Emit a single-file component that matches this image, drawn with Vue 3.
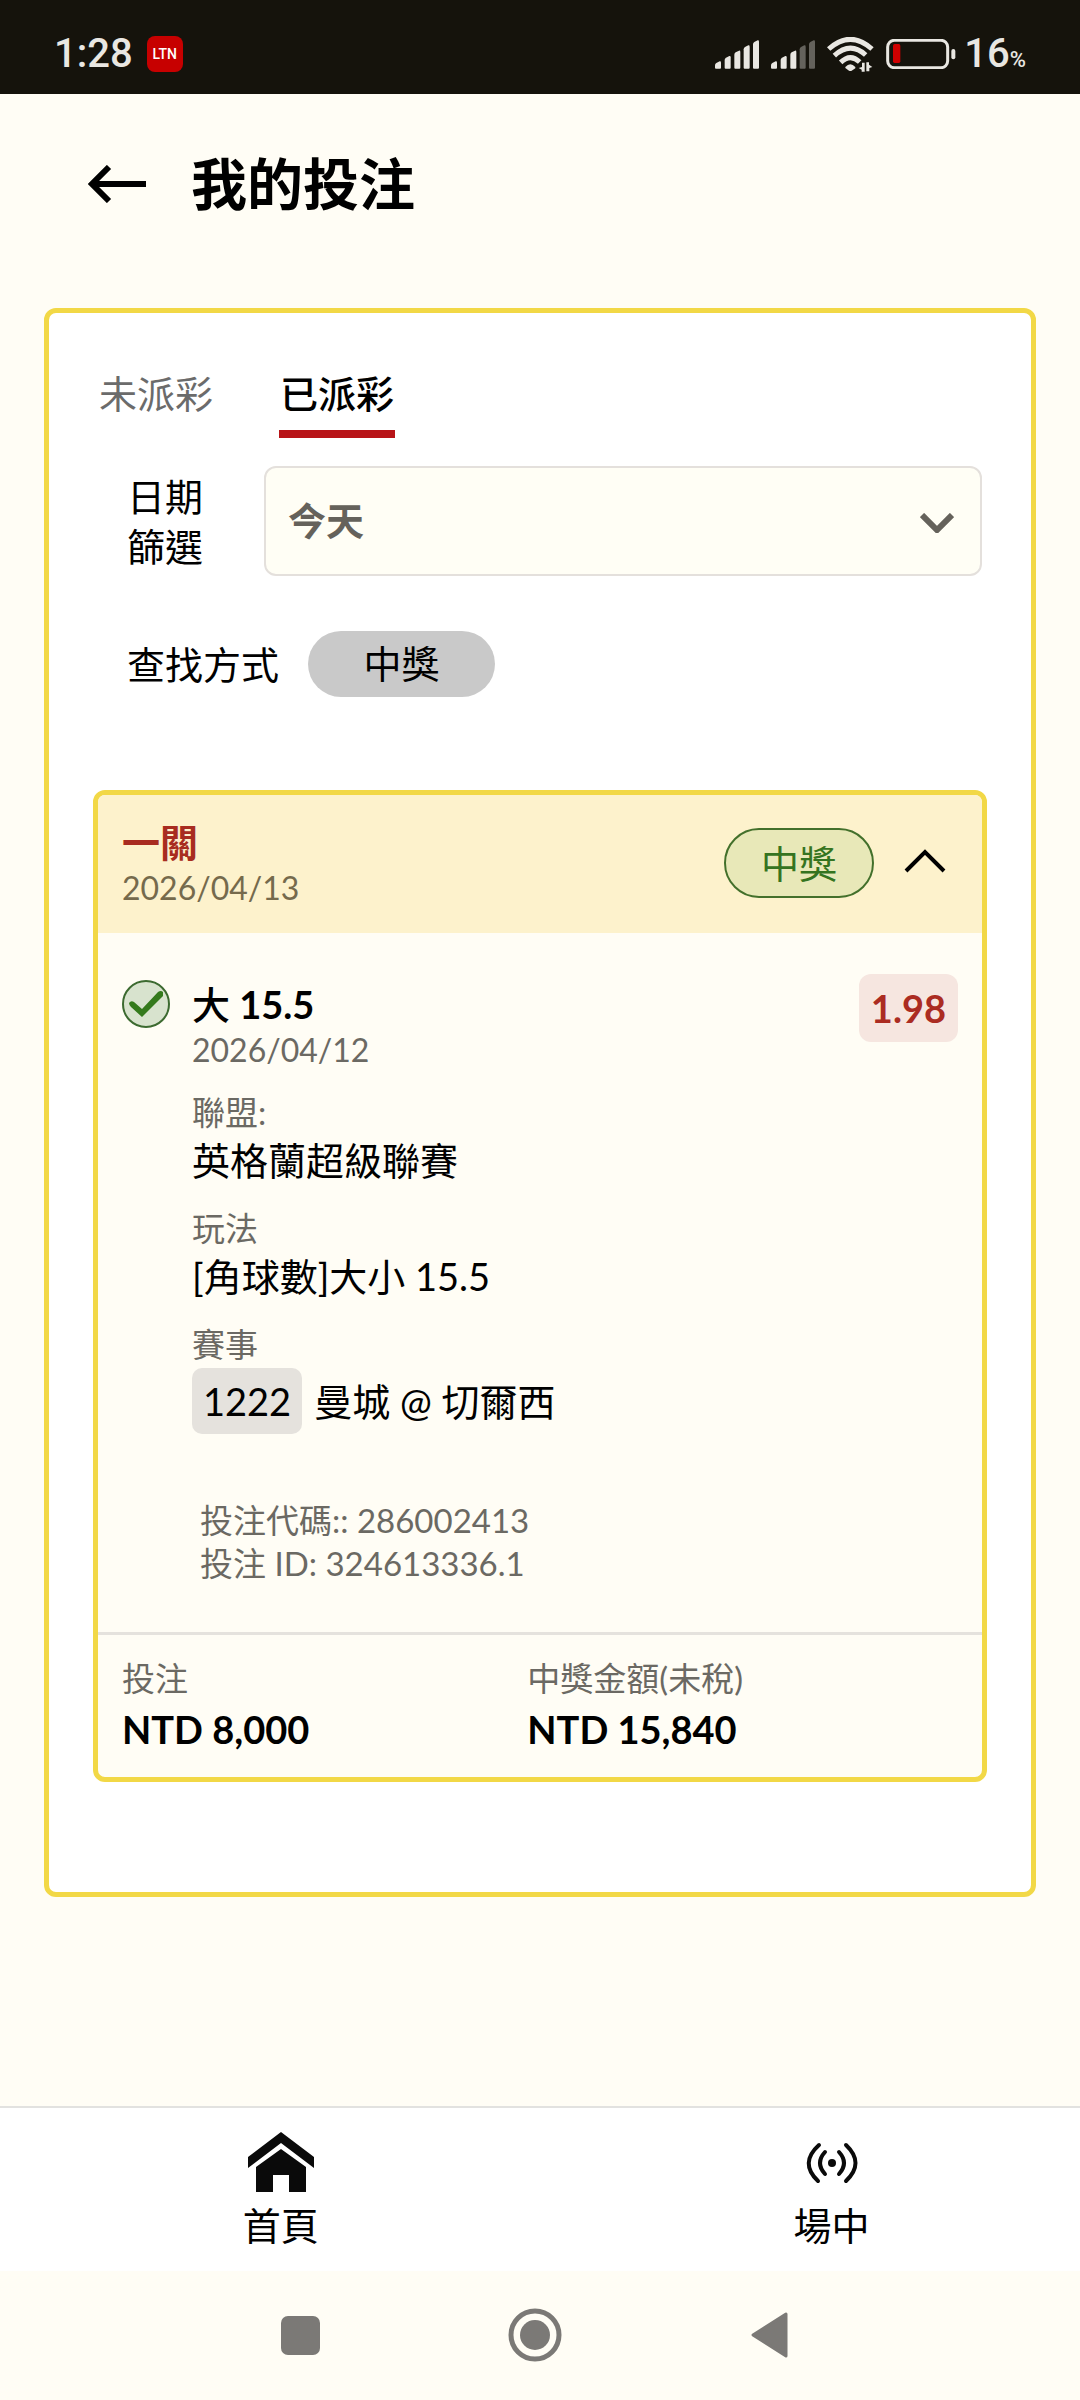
<script setup>
import { ref } from 'vue'

const tab = ref('settled')
const day = ref('today')
const open = ref(true)

const tabs = [
  { id: 'open', label: '未派彩' },
  { id: 'settled', label: '已派彩' }
]
const signals = [5, 3]
const bars = [
  { x: 0, top: 64 },
  { x: 29, top: 48 },
  { x: 58, top: 32 },
  { x: 86, top: 16 },
  { x: 114, top: 1 }
]
const barPath = (b) =>
  `M${b.x} ${b.top + 12}Q${b.x} ${b.top + 7} ${b.x + 4} ${b.top + 5}L${b.x + 14} ${b.top}Q${b.x + 18} ${b.top - 1} ${b.x + 18} ${b.top + 4}V83Q${b.x + 18} 86 ${b.x + 15} 86H${b.x + 3}Q${b.x} 86 ${b.x} 83Z`
</script>

<template>
  <div class="page">
    <div class="status">
      <span class="clock">1:28</span>
      <span class="app-badge">LTN</span>
      <div class="status-icons">
        <svg v-for="(level, i) in signals" :key="i" class="signal" viewBox="0 0 132 87" aria-hidden="true">
          <path v-for="(b, n) in bars" :key="n" :d="barPath(b)" :fill="n < level ? '#e9e7e2' : '#64625c'" />
        </svg>
        <svg class="wifi" viewBox="0 0 141 105" aria-hidden="true">
          <g fill="none" stroke="#e9e7e2" stroke-width="15">
            <path d="M5 36Q70-22 135 36" />
            <path d="M22 56Q70 12 116 54" />
            <path d="M41 76Q70 48 98 75" />
          </g>
          <path d="M55 90Q70 73 85 90V94L74 101Q70 103 66 101L55 93Z" fill="#e9e7e2" />
          <path d="M105 77H113V104H104V98L95 93L105 90ZM118 76H126V83L136 90L127 93V103H118Z" fill="#e9e7e2" />
        </svg>
        <svg class="battery" viewBox="0 0 208 90" aria-hidden="true">
          <rect x="4" y="4" width="180" height="82" rx="20" fill="none" stroke="#e9e7e2" stroke-width="9" />
          <rect x="20" y="15" width="22" height="57" rx="5" fill="#d00000" />
          <rect x="195" y="30" width="12" height="31" rx="6" fill="#e9e7e2" />
        </svg>
        <span class="charge">16<small>%</small></span>
      </div>
    </div>

    <header class="header">
      <button class="back" type="button" aria-label="返回">
        <svg viewBox="0 0 58 38"><path d="M58 19H5M21 2L4 19L21 36" fill="none" stroke="#000" stroke-width="6" /></svg>
      </button>
      <h1>我的投注</h1>
    </header>

    <main class="main">
      <section class="panel">
        <div class="tabs" role="tablist">
          <button
            v-for="t in tabs"
            :key="t.id"
            type="button"
            role="tab"
            class="tab"
            :class="{ active: tab === t.id }"
            :aria-selected="tab === t.id"
            @click="tab = t.id"
          >{{ t.label }}</button>
        </div>

        <div class="filter">
          <label for="day">日期篩選</label>
          <div class="select-wrap">
            <select id="day" v-model="day">
              <option value="today">今天</option>
            </select>
            <svg viewBox="0 0 34 20" aria-hidden="true"><path d="M2 2L17 17L32 2" fill="none" stroke="#65625b" stroke-width="6" /></svg>
          </div>
        </div>

        <div class="search">
          <span>查找方式</span>
          <button type="button" class="chip">中獎</button>
        </div>

        <article class="card">
          <div class="card-head">
            <div>
              <h2>一關</h2>
              <time class="muted-gold">2026/04/13</time>
            </div>
            <span class="won">中獎</span>
            <button class="toggle" type="button" aria-label="收合" @click="open = !open">
              <svg viewBox="0 0 42 24"><path d="M2 22L21 3L40 22" fill="none" stroke="#000" stroke-width="4" /></svg>
            </button>
          </div>

          <div v-show="open" class="card-body">
            <svg class="check" viewBox="0 0 48 48" aria-hidden="true">
              <circle cx="24" cy="24" r="23" fill="#d8e3ce" stroke="#3c6a30" stroke-width="2" />
              <path d="M7 23Q9 20 12 22L20 29L36 12Q39 10 41 12V16L20 37L9 27Q7 25 7 23Z" fill="#347a1c" />
            </svg>
            <div class="details">
              <h3><span class="pick">大</span> 15.5</h3>
              <time class="sub">2026/04/12</time>
              <dl>
                <dt>聯盟:</dt>
                <dd>英格蘭超級聯賽</dd>
                <dt>玩法</dt>
                <dd>[角球數]大小 15.5</dd>
                <dt>賽事</dt>
                <dd class="match"><span class="code">1222</span>曼城 @ 切爾西</dd>
              </dl>
              <div class="ids">
                <p>投注代碼:: 286002413</p>
                <p>投注 ID: 324613336.1</p>
              </div>
            </div>
            <span class="odds">1.98</span>
          </div>

          <dl class="totals">
            <div>
              <dt>投注</dt>
              <dd>NTD 8,000</dd>
            </div>
            <div>
              <dt>中獎金額(未稅)</dt>
              <dd>NTD 15,840</dd>
            </div>
          </dl>
        </article>
      </section>
    </main>

    <nav class="nav">
      <a href="#home">
        <svg class="nav-icon" viewBox="0 0 66 60" aria-hidden="true">
          <path d="M33 0L66 25V36L33 11L0 36V25Z" fill="#0a0a0a" />
          <path d="M33 17L58 35V60H41V43H25V60H8V35Z" fill="#0a0a0a" />
        </svg>
        首頁
      </a>
      <a href="#live">
        <svg class="nav-icon" viewBox="0 0 66 60" aria-hidden="true">
          <circle cx="33" cy="31" r="4" fill="#0a0a0a" />
          <g fill="none" stroke="#0a0a0a" stroke-width="4" stroke-linecap="round">
            <path d="M26 20Q16 31 26 42M40 20Q50 31 40 42" />
            <path d="M20 13Q0 31 19 49M47 13Q66 31 47 49" />
          </g>
        </svg>
        場中
      </a>
    </nav>

    <div class="system">
      <button type="button" aria-label="最近使用">
        <svg viewBox="0 0 54 54"><rect x="8" y="8" width="39" height="39" rx="7" fill="#7b7976" /></svg>
      </button>
      <button type="button" aria-label="主畫面">
        <svg viewBox="0 0 54 54">
          <circle cx="27" cy="27" r="24" fill="none" stroke="#7b7976" stroke-width="5" />
          <circle cx="27" cy="27" r="15" fill="#7b7976" />
        </svg>
      </button>
      <button type="button" aria-label="上一頁">
        <svg viewBox="0 0 54 54"><path d="M10 27L43 6V48Z" fill="#7b7976" stroke="#7b7976" stroke-width="3" stroke-linejoin="round" /></svg>
      </button>
    </div>
  </div>
</template>

<style>
body {
  margin: 0;
  background: #fffdf5;
}
</style>

<style scoped>
.page {
  display: flex;
  flex-direction: column;
  min-height: 100vh;
  background: #fffdf5;
  color: #000;
  font-family: Lato, "Noto Sans CJK TC", sans-serif;
  font-size: 38px;
  line-height: 50px;
}
h1, h2, h3, p, dl, dd {
  margin: 0;
  font-size: inherit;
}
button {
  padding: 0;
  border: 0;
  background: none;
  color: inherit;
  font: inherit;
  cursor: pointer;
}
svg {
  display: block;
}
time {
  display: block;
}

.status {
  display: flex;
  align-items: center;
  box-sizing: border-box;
  height: 94px;
  padding: 14px 54px 0 54px;
  background: #15130c;
  color: #e9e7e2;
  font-family: Roboto, sans-serif;
  font-size: 40px;
  font-weight: 500;
}
.app-badge {
  width: 36px;
  margin-left: 14px;
  border-radius: 8px;
  background: #c70000;
  color: #fff;
  font-size: 14px;
  line-height: 36px;
  text-align: center;
}
.status-icons {
  display: flex;
  align-items: center;
  gap: 12px;
  margin-left: auto;
}
.signal {
  width: 44px;
  height: 29px;
}
.wifi {
  width: 47px;
  height: 35px;
}
.battery {
  width: 70px;
  height: 30px;
}
.charge {
  display: flex;
  align-items: baseline;
  margin-left: -4px;
}
.charge small {
  font-size: 22px;
  line-height: 22px;
}

.header {
  display: flex;
  align-items: center;
  gap: 45px;
  padding: 50px 88px 84px;
}
.back svg {
  width: 58px;
  height: 38px;
}
h1 {
  font-size: 56px;
  line-height: 80px;
  font-weight: 700;
}

.main {
  flex: 1;
  padding: 0 44px;
}
.panel {
  padding: 55px 44px 110px;
  border: 5px solid #f2d846;
  border-radius: 12px;
  background: #fff;
}
.tabs {
  display: flex;
  gap: 65px;
  padding: 0 5px;
}
.tab {
  padding: 0 1px 12px;
  border-bottom: 8px solid transparent;
  color: #6b6b6b;
}
.tab.active {
  border-color: #b81418;
  color: #000;
  font-weight: 500;
}
.filter {
  display: flex;
  align-items: center;
  gap: 60px;
  margin-top: 28px;
  padding: 0 5px 0 34px;
}
.filter label {
  width: 77px;
}
.select-wrap {
  position: relative;
  flex: 1;
}
select {
  display: block;
  box-sizing: border-box;
  width: 100%;
  height: 110px;
  padding: 0 80px 2px 22px;
  border: 2px solid #e4e0dc;
  border-radius: 12px;
  appearance: none;
  background: #fffef5;
  color: #65625b;
  font: inherit;
  font-weight: 700;
}
.select-wrap svg {
  position: absolute;
  top: 47px;
  right: 28px;
  width: 34px;
  height: 20px;
  pointer-events: none;
}
.search {
  display: flex;
  align-items: center;
  gap: 29px;
  margin-top: 55px;
  padding-left: 34px;
}
.chip {
  width: 187px;
  padding-bottom: 2px;
  border-radius: 33px;
  background: #c9c9c9;
  line-height: 64px;
}

.card {
  margin-top: 93px;
  border: 5px solid #f2d846;
  border-radius: 12px;
  background: #fffdf5;
}
.card-head {
  display: flex;
  align-items: center;
  padding: 22px 36px 24px 24px;
  border-radius: 7px 7px 0 0;
  background: #fdf2cc;
}
h2 {
  color: #a82c20;
  font-weight: 700;
}
.muted-gold {
  color: #756a4c;
  line-height: 42px;
}
.won {
  box-sizing: border-box;
  width: 150px;
  margin-left: auto;
  border: 2px solid #43702b;
  border-radius: 35px;
  background: #e8e8b8;
  color: #357420;
  line-height: 66px;
  text-align: center;
}
.toggle {
  margin-left: 30px;
  padding-bottom: 4px;
}
.toggle svg {
  width: 42px;
  height: 24px;
}

.card-body {
  display: flex;
  align-items: flex-start;
  padding: 41px 24px 47px;
}
.check {
  width: 48px;
  height: 48px;
  margin-top: 6px;
}
.details {
  flex: 1;
  margin-top: 5px;
  padding-left: 22px;
}
h3 {
  font-weight: 700;
}
.pick {
  font-weight: 500;
}
.sub,
dt {
  color: #6b6963;
  font-size: 33px;
  line-height: 42px;
}
.sub,
.muted-gold {
  font-size: 32px;
}
.details dt {
  margin-top: 20px;
}
.details dd {
  line-height: 54px;
}
.details .match {
  display: flex;
  align-items: center;
  gap: 12px;
  margin-top: 3px;
}
.code {
  padding: 0 11px;
  border-radius: 10px;
  background: #e5e2dd;
  line-height: 66px;
}
.ids {
  margin-top: 65px;
  padding-left: 8px;
  color: #6b6963;
  font-size: 33px;
  line-height: 43px;
}
.odds {
  padding: 0 12px;
  border-radius: 12px;
  background: #f6e6e0;
  color: #ab2c22;
  font-weight: 700;
  line-height: 68px;
}
.totals {
  display: grid;
  grid-template-columns: 16fr 17fr;
  padding: 22px 24px 18px;
  border-top: 3px solid #e5e2dd;
}
.totals dd {
  font-weight: 700;
  line-height: 60px;
}

.nav {
  display: flex;
  border-top: 2px solid #e2e2e0;
  background: #fff;
}
.nav a {
  display: flex;
  flex-direction: column;
  align-items: center;
  gap: 8px;
  box-sizing: border-box;
  width: 52%;
  padding: 24px 0 21px;
  color: #000;
  text-decoration: none;
}
.nav a + a {
  width: 48%;
  padding-left: 2%;
}
.nav-icon {
  width: 66px;
  height: 60px;
}
.system {
  display: flex;
  justify-content: center;
  gap: 181px;
  padding: 37px 10px 38px 0;
}
.system svg {
  width: 54px;
  height: 54px;
}
</style>
